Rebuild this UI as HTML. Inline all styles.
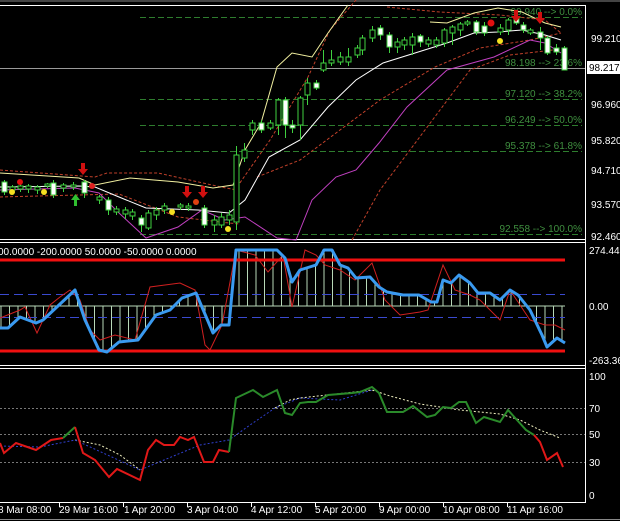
<!DOCTYPE html>
<html><head><meta charset="utf-8"><style>
html,body{margin:0;padding:0;background:#000;width:620px;height:521px;overflow:hidden}
svg{display:block}
text{font-family:"Liberation Sans",sans-serif;font-size:10px;fill:#fff}
.fib{fill:#3f8f3f;font-size:10px}
</style></head><body>
<svg width="620" height="521" viewBox="0 0 620 521" xmlns="http://www.w3.org/2000/svg">
<defs>
<pattern id="vl" x="0" y="0" width="8.5" height="10" patternUnits="userSpaceOnUse">
<line x1="1" y1="0" x2="1" y2="10" stroke="#b8d8b8" stroke-width="1"/>
</pattern>
<clipPath id="hc"><polygon points="0,306 0,328 8,328 20,317 36,323 43,320 75,290 85,320 99,350 107,352 119,342 138,340 156,315 170,310 182,298 196,293 213,333 221,325 229,325 236,250 261,250 277,250 285,258 292,282 300,270 316,265 324,250 332,250 340,265 348,268 356,278 370,277 379,287 387,292 403,295 419,295 431,302 437,302 443,280 451,283 459,275 470,283 478,293 490,293 500,300 510,290 518,295 530,310 542,335 547,347 557,338 565,343 565,306"/></clipPath>
</defs>
<!-- frame -->
<line x1="0" y1="1" x2="620" y2="1" stroke="#888" stroke-width="1"/>
<line x1="0" y1="5.5" x2="586" y2="5.5" stroke="#fff"/>
<line x1="0" y1="239.5" x2="586" y2="239.5" stroke="#fff"/>
<line x1="0" y1="242.5" x2="586" y2="242.5" stroke="#fff"/>
<line x1="0" y1="365.5" x2="586" y2="365.5" stroke="#fff"/>
<line x1="0" y1="368.5" x2="586" y2="368.5" stroke="#fff"/>
<line x1="0" y1="502.5" x2="586" y2="502.5" stroke="#fff"/>
<line x1="585.5" y1="5" x2="585.5" y2="503" stroke="#fff"/>

<!-- fib lines -->
<g stroke="#2e7d2e" stroke-dasharray="6,3" stroke-width="1">
<line x1="140" y1="17.5" x2="582" y2="17.5"/>
<line x1="140" y1="99.5" x2="582" y2="99.5"/>
<line x1="140" y1="125.5" x2="582" y2="125.5"/>
<line x1="140" y1="151.5" x2="582" y2="151.5"/>
<line x1="140" y1="234.5" x2="582" y2="234.5"/>
</g>
<line x1="0" y1="68.5" x2="585" y2="68.5" stroke="#9a9a9a"/>
<g text-anchor="end">
<text class="fib" x="582" y="15">99.940 --&gt; 0.0%</text>
<text class="fib" x="582" y="66">98.198 --&gt; 23.6%</text>
<text class="fib" x="582" y="97">97.120 --&gt; 38.2%</text>
<text class="fib" x="582" y="123">96.249 --&gt; 50.0%</text>
<text class="fib" x="582" y="149">95.378 --&gt; 61.8%</text>
<text class="fib" x="582" y="232">92.558 --&gt; 100.0%</text>
</g>

<!-- dashed bands -->
<g fill="none" stroke="#c0402a" stroke-dasharray="3,2" stroke-width="1">
<polyline points="0,170 95,177 107,173 158,173 221,187 237,190"/>
<polyline points="0,197 119,194 178,217 229,223 240,224"/>
<polyline points="237,187 270,140 308,77 330,30 356,0"/>
<polyline points="257,177 300,160 340,130 380,100 435,67 480,48 530,40 561,33"/>
<polyline points="352,240 380,190 410,150 440,110 470,70 510,55 553,50"/>
<polyline points="387,7 440,12 500,15 545,20 561,33"/>
</g>
<!-- bands -->
<polyline fill="none" stroke="#f2f0a0" stroke-width="1" points="0,173 79,178 95,185 130,178 178,182 213,188 233,185 245,150 261,123 277,67 292,53 312,57 328,33 348,5"/>
<polyline fill="none" stroke="#f2f0a0" stroke-width="1" points="430,22 447,23 474,13 498,8 522,12 545,23 561,27"/>
<polyline fill="none" stroke="#fff" stroke-width="1" points="0,187 79,186 95,187 119,197 146,208 198,210 229,213 245,200 269,157 300,140 328,107 356,80 383,63 415,53 447,43 474,33 498,32 522,30 545,35 561,40"/>
<polyline fill="none" stroke="#c040c0" stroke-width="1" points="0,190 75,188 99,193 119,213 146,238 178,227 202,210 225,220 245,217 277,238 296,240 312,200 336,177 356,170 379,143 407,107 447,70 494,57 530,40 545,43 561,53"/>

<!-- candles -->
<g stroke="#3fd03f" stroke-width="1">
<line x1="4.5" y1="180" x2="4.5" y2="195"/><rect x="2" y="182" width="5" height="10" fill="#fff"/>
<line x1="12.5" y1="185" x2="12.5" y2="193"/><rect x="10" y="187" width="5" height="3" fill="#000"/>
<line x1="20.5" y1="184" x2="20.5" y2="192"/><rect x="18" y="186" width="5" height="3" fill="#000"/>
<line x1="28.5" y1="184" x2="28.5" y2="193"/><rect x="26" y="186" width="5" height="3" fill="#000"/>
<line x1="37.5" y1="185" x2="37.5" y2="194"/><rect x="35" y="187" width="5" height="3" fill="#000"/>
<line x1="47.5" y1="183" x2="47.5" y2="188"/><rect x="45" y="184" width="5" height="2" fill="#000"/>
<line x1="53.5" y1="180" x2="53.5" y2="198"/><rect x="51" y="183" width="5" height="12" fill="#fff"/>
<line x1="63.5" y1="183" x2="63.5" y2="192"/><rect x="61" y="185" width="5" height="3" fill="#000"/>
<line x1="73.5" y1="182" x2="73.5" y2="190"/><rect x="71" y="185" width="5" height="2" fill="#000"/>
<line x1="84.5" y1="180" x2="84.5" y2="198"/><rect x="82" y="182" width="5" height="11" fill="#fff"/>
<line x1="99.5" y1="195" x2="99.5" y2="204"/><rect x="97" y="197" width="5" height="3" fill="#000"/>
<line x1="108.5" y1="197" x2="108.5" y2="215"/><rect x="106" y="200" width="5" height="10" fill="#fff"/>
<line x1="116.5" y1="206" x2="116.5" y2="215"/><rect x="114" y="209" width="5" height="3" fill="#000"/>
<line x1="125.5" y1="207" x2="125.5" y2="219"/><rect x="123" y="210" width="5" height="4" fill="#000"/>
<line x1="132.5" y1="209" x2="132.5" y2="220"/><rect x="130" y="212" width="5" height="4" fill="#000"/>
<line x1="141.5" y1="215" x2="141.5" y2="232"/><rect x="139" y="218" width="5" height="7" fill="#fff"/>
<line x1="148.5" y1="210" x2="148.5" y2="230"/><rect x="146" y="213" width="5" height="15" fill="#000"/>
<line x1="156.5" y1="207" x2="156.5" y2="220"/><rect x="154" y="210" width="5" height="5" fill="#000"/>
<line x1="164.5" y1="203" x2="164.5" y2="214"/><rect x="162" y="206" width="5" height="4" fill="#000"/>
<line x1="180.5" y1="203" x2="180.5" y2="210"/><rect x="178" y="205" width="5" height="2" fill="#000"/>
<line x1="188.5" y1="203" x2="188.5" y2="211"/><rect x="186" y="206" width="5" height="2" fill="#000"/>
<line x1="204.5" y1="205" x2="204.5" y2="228"/><rect x="202" y="208" width="5" height="17" fill="#fff"/>
<line x1="214.5" y1="215" x2="214.5" y2="232"/><rect x="212" y="220" width="5" height="5" fill="#000"/>
<line x1="221.5" y1="213" x2="221.5" y2="228"/><rect x="219" y="217" width="5" height="8" fill="#000"/>
<line x1="229.5" y1="210" x2="229.5" y2="225"/><rect x="227" y="215" width="5" height="5" fill="#000"/>
<line x1="236.5" y1="146" x2="236.5" y2="230"/><rect x="234" y="155" width="5" height="67" fill="#000"/>
<line x1="244.5" y1="143" x2="244.5" y2="162"/><rect x="242" y="150" width="5" height="8" fill="#000"/>
<line x1="252.5" y1="120" x2="252.5" y2="135"/><rect x="250" y="123" width="5" height="7" fill="#000"/>
<line x1="261.5" y1="120" x2="261.5" y2="133"/><rect x="259" y="123" width="5" height="7" fill="#fff"/>
<line x1="270.5" y1="120" x2="270.5" y2="130"/><rect x="268" y="123" width="5" height="5" fill="#000"/>
<line x1="278.5" y1="98" x2="278.5" y2="135"/><rect x="276" y="100" width="5" height="25" fill="#000"/>
<line x1="285.5" y1="97" x2="285.5" y2="138"/><rect x="283" y="100" width="5" height="25" fill="#fff"/>
<line x1="292.5" y1="120" x2="292.5" y2="133"/><rect x="290" y="125" width="5" height="3" fill="#fff"/>
<line x1="300.5" y1="96" x2="300.5" y2="140"/><rect x="298" y="98" width="5" height="27" fill="#000"/>
<line x1="307.5" y1="78" x2="307.5" y2="105"/><rect x="305" y="83" width="5" height="12" fill="#000"/>
<line x1="316.5" y1="80" x2="316.5" y2="90"/><rect x="314" y="83" width="5" height="5" fill="#fff"/>
<line x1="323.5" y1="50" x2="323.5" y2="72"/><rect x="321" y="63" width="5" height="7" fill="#000"/>
<line x1="331.5" y1="50" x2="331.5" y2="66"/><rect x="329" y="60" width="5" height="3" fill="#000"/>
<line x1="340.5" y1="52" x2="340.5" y2="65"/><rect x="338" y="57" width="5" height="5" fill="#000"/>
<line x1="348.5" y1="48" x2="348.5" y2="66"/><rect x="346" y="57" width="5" height="5" fill="#000"/>
<line x1="357.5" y1="45" x2="357.5" y2="58"/><rect x="355" y="48" width="5" height="7" fill="#000"/>
<line x1="362.5" y1="35" x2="362.5" y2="55"/><rect x="360" y="38" width="5" height="12" fill="#000"/>
<line x1="372.5" y1="26" x2="372.5" y2="42"/><rect x="370" y="30" width="5" height="8" fill="#000"/>
<line x1="380.5" y1="25" x2="380.5" y2="40"/><rect x="378" y="28" width="5" height="7" fill="#fff"/>
<line x1="389.5" y1="32" x2="389.5" y2="53"/><rect x="387" y="35" width="5" height="12" fill="#fff"/>
<line x1="397.5" y1="38" x2="397.5" y2="53"/><rect x="395" y="42" width="5" height="5" fill="#000"/>
<line x1="404.5" y1="37" x2="404.5" y2="50"/><rect x="402" y="40" width="5" height="5" fill="#000"/>
<line x1="412.5" y1="33" x2="412.5" y2="55"/><rect x="410" y="37" width="5" height="8" fill="#000"/>
<line x1="420.5" y1="34" x2="420.5" y2="47"/><rect x="418" y="36" width="5" height="6" fill="#fff"/>
<line x1="428.5" y1="37" x2="428.5" y2="47"/><rect x="426" y="40" width="5" height="4" fill="#000"/>
<line x1="436.5" y1="37" x2="436.5" y2="48"/><rect x="434" y="40" width="5" height="5" fill="#000"/>
<line x1="444.5" y1="28" x2="444.5" y2="47"/><rect x="442" y="30" width="5" height="13" fill="#000"/>
<line x1="452.5" y1="25" x2="452.5" y2="45"/><rect x="450" y="27" width="5" height="6" fill="#000"/>
<line x1="460.5" y1="22" x2="460.5" y2="36"/><rect x="458" y="24" width="5" height="6" fill="#000"/>
<line x1="467.5" y1="20" x2="467.5" y2="26"/><rect x="465" y="22" width="5" height="2" fill="#000"/>
<line x1="476.5" y1="20" x2="476.5" y2="35"/><rect x="474" y="22" width="5" height="10" fill="#fff"/>
<line x1="484.5" y1="22" x2="484.5" y2="36"/><rect x="482" y="26" width="5" height="7" fill="#fff"/>
<line x1="500.5" y1="24" x2="500.5" y2="35"/><rect x="498" y="28" width="5" height="4" fill="#000"/>
<line x1="508.5" y1="18" x2="508.5" y2="35"/><rect x="506" y="20" width="5" height="10" fill="#000"/>
<line x1="516.5" y1="14" x2="516.5" y2="25"/><rect x="514" y="18" width="5" height="5" fill="#fff"/>
<line x1="523.5" y1="22" x2="523.5" y2="33"/><rect x="521" y="25" width="5" height="5" fill="#fff"/>
<line x1="530.5" y1="28" x2="530.5" y2="35"/><rect x="528" y="30" width="5" height="3" fill="#000"/>
<line x1="540.5" y1="27" x2="540.5" y2="50"/><rect x="538" y="32" width="5" height="6" fill="#fff"/>
<line x1="547.5" y1="36" x2="547.5" y2="55"/><rect x="545" y="38" width="5" height="15" fill="#fff"/>
<line x1="556.5" y1="44" x2="556.5" y2="55"/><rect x="554" y="48" width="5" height="4" fill="#fff"/>
<line x1="564.5" y1="46" x2="564.5" y2="70"/><rect x="562" y="48" width="5" height="22" fill="#fff"/>
</g>
<!-- markers -->
<g>
<circle cx="20" cy="182" r="3" fill="#e01010"/>
<circle cx="92" cy="186" r="3" fill="#e02020"/>
<circle cx="196" cy="202" r="3" fill="#e04010"/>
<circle cx="491" cy="23" r="3.5" fill="#e01010"/>
<circle cx="12" cy="192" r="3" fill="#f4e020"/>
<circle cx="44" cy="192" r="3" fill="#f4e020"/>
<circle cx="172" cy="212" r="3" fill="#f4e020"/>
<circle cx="228" cy="229" r="3" fill="#f4e020"/>
<circle cx="500" cy="41" r="3" fill="#f4e020"/>
</g>
<g fill="#d01010">
<path d="M81,163h4v6h3l-5,6l-5,-6h3z"/>
<path d="M185,186h4v6h3l-5,6l-5,-6h3z"/>
<path d="M201,186h4v6h3l-5,6l-5,-6h3z"/>
<path d="M514,10h4v6h3l-5,6l-5,-6h3z"/>
<path d="M538,12h4v6h3l-5,6l-5,-6h3z"/>
</g>
<path d="M74,206h3v-6h3l-4.5,-6l-4.5,6h3z" fill="#30c030"/>

<!-- price axis -->
<g>
<text x="591" y="42">99.210</text>
<text x="591" y="108">96.960</text>
<text x="591" y="144">95.820</text>
<text x="591" y="174">94.710</text>
<text x="591" y="208">93.570</text>
<text x="591" y="240">92.460</text>
<rect x="587" y="61" width="33" height="13" fill="#fff"/>
<text x="589" y="71" style="fill:#000">98.217</text>
</g>

<!-- panel 2 -->
<text x="-2" y="255">00.0000 -200.0000 50.0000 -50.0000 0.0000</text>
<rect x="0" y="240" width="585" height="125" fill="url(#vl)" clip-path="url(#hc)"/>
<line x1="0" y1="306" x2="565" y2="306" stroke="#b8d8b8"/>
<g stroke="#3a4ad0" stroke-dasharray="9,5">
<line x1="0" y1="294.5" x2="565" y2="294.5"/>
<line x1="0" y1="317.5" x2="565" y2="317.5"/>
</g>
<line x1="0" y1="260" x2="565" y2="260" stroke="#f01010" stroke-width="3"/>
<line x1="0" y1="351" x2="565" y2="351" stroke="#f01010" stroke-width="3"/>
<polyline fill="none" stroke="#d02020" stroke-width="1" points="0,318 20,310 25,307 37,333 50,305 60,297 70,290 80,300 90,330 100,340 115,335 135,340 150,287 165,285 180,283 195,290 205,345 210,350 222,325 236,250 255,255 268,272 283,255 292,307 305,250 316,255 325,265 340,270 355,280 372,263 385,300 400,315 420,312 428,310 443,265 455,290 470,295 480,300 500,320 510,290 520,305 530,320 545,325 555,325 565,330"/>
<polyline fill="none" stroke="#3a9af0" stroke-width="3" stroke-linejoin="round" points="0,328 8,328 20,317 36,323 43,320 75,290 85,320 99,350 107,352 119,342 138,340 156,315 170,310 182,298 196,293 213,333 221,325 229,325 236,250 261,250 277,250 285,258 292,282 300,270 316,265 324,250 332,250 340,265 348,268 356,278 370,277 379,287 387,292 403,295 419,295 431,302 437,302 443,280 451,283 459,275 470,283 478,293 490,293 500,300 510,290 518,295 530,310 542,335 547,347 557,338 565,343"/>
<text x="589" y="254">274.445</text>
<text x="589" y="310">0.00</text>
<text x="589" y="364">-263.36</text>

<!-- panel 3 -->
<g stroke="#777" stroke-dasharray="2,2">
<line x1="0" y1="408.5" x2="585" y2="408.5"/>
<line x1="0" y1="434.5" x2="585" y2="434.5"/>
<line x1="0" y1="462.5" x2="585" y2="462.5"/>
</g>
<polyline fill="none" stroke="#f0f0c0" stroke-dasharray="2,2" points="75,440 100,445 120,455 140,470"/>
<polyline fill="none" stroke="#3040d0" stroke-dasharray="2,2" points="0,446 40,447 75,440 140,470 200,445 229,440 250,425 275,408 300,398 340,400 372,390"/>
<polyline fill="none" stroke="#f0f0c0" stroke-dasharray="2,2" points="275,408 290,400 300,398 372,390 390,396 420,404 460,410 500,414 520,420 540,430 560,438"/>
<polyline fill="none" stroke="#e01818" stroke-width="2" points="0,443 4,453 16,443 36,450 51,440 63,438"/>
<polyline fill="none" stroke="#2a8a2a" stroke-width="2" points="63,438 75,427"/>
<polyline fill="none" stroke="#e01818" stroke-width="2" points="75,427 83,453 95,460 109,477 117,469 140,480 148,450 156,440 164,445 174,445 180,437 188,440 194,437 204,462 213,462 219,450 229,452"/>
<polyline fill="none" stroke="#2a8a2a" stroke-width="2" points="229,452 236,398 253,390 263,397 277,390 285,413 292,415 300,403 308,402 316,402 328,395 352,393 360,392 372,387 379,393 387,412 403,412 413,406 427,417 435,415 443,407 451,408 459,402 466,402 476,423 484,417 500,422 508,410 526,430 534,435"/>
<polyline fill="none" stroke="#e01818" stroke-width="2" points="534,435 540,442 547,460 557,453 563,467"/>
<text x="589" y="380">100</text>
<text x="589" y="412">70</text>
<text x="589" y="438">50</text>
<text x="589" y="466">30</text>
<text x="589" y="499">0</text>

<!-- time axis -->
<g>
<text x="-2" y="513">8 Mar 08:00</text>
<text x="59" y="513">29 Mar 16:00</text>
<text x="124" y="513">1 Apr 20:00</text>
<text x="187" y="513">3 Apr 04:00</text>
<text x="251" y="513">4 Apr 12:00</text>
<text x="315" y="513">5 Apr 20:00</text>
<text x="379" y="513">9 Apr 00:00</text>
<text x="443" y="513">10 Apr 08:00</text>
<text x="507" y="513">11 Apr 16:00</text>
</g>
<g stroke="#fff">
<line x1="59.5" y1="503" x2="59.5" y2="507"/><line x1="123.5" y1="503" x2="123.5" y2="507"/>
<line x1="187.5" y1="503" x2="187.5" y2="507"/><line x1="251.5" y1="503" x2="251.5" y2="507"/>
<line x1="315.5" y1="503" x2="315.5" y2="507"/><line x1="379.5" y1="503" x2="379.5" y2="507"/>
<line x1="443.5" y1="503" x2="443.5" y2="507"/><line x1="507.5" y1="503" x2="507.5" y2="507"/>
</g>
<line x1="0" y1="519.5" x2="620" y2="519.5" stroke="#888"/>
</svg>
</body></html>
